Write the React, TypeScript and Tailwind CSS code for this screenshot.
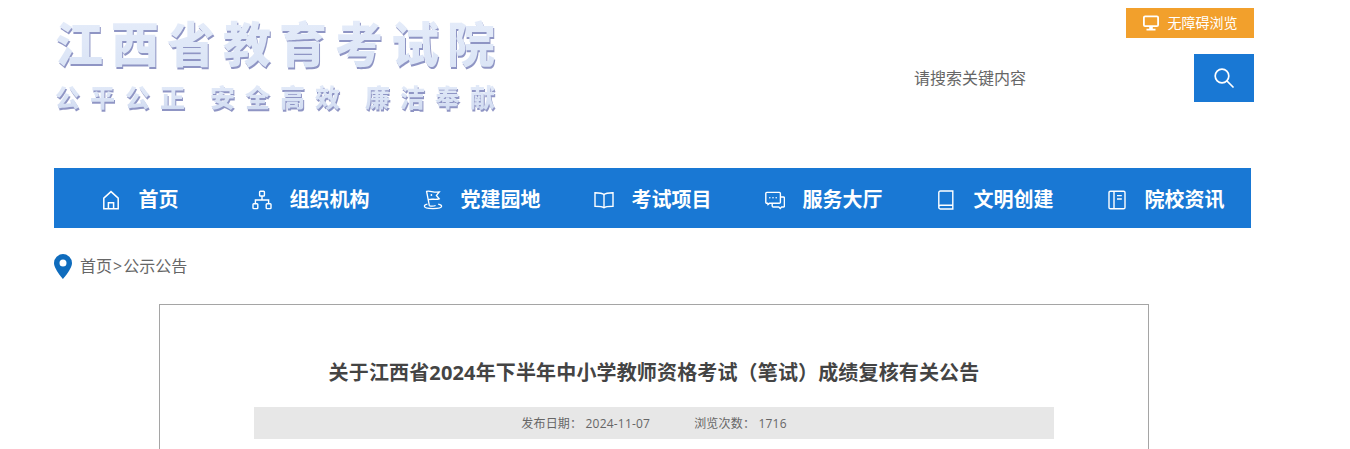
import React from 'react';

const iconClass = 'mt-[3px] w-5 h-5 shrink-0';

function HomeIcon() {
  return (
    <svg viewBox="0 0 20 20" className={iconClass} fill="none" stroke="currentColor" strokeWidth={1.5}>
      <path d="M2.800 18.800V8.200L10 1.600l7.200 6.600v10.600z" />
      <path d="M7.400 18.800v-6h5.200v6" />
    </svg>
  );
}

function OrgIcon() {
  return (
    <svg viewBox="0 0 20 20" className={iconClass} fill="none" stroke="currentColor" strokeWidth={1.4}>
      <rect x="7.600" y="1.200" width="4.800" height="4.800" rx="0.800" />
      <rect x="1" y="13.800" width="4.800" height="4.800" rx="0.800" />
      <rect x="14.200" y="13.800" width="4.800" height="4.800" rx="0.800" />
      <path d="M10 6v4M3.400 13.800V10h13.200v3.800" />
    </svg>
  );
}

function FlagIcon() {
  return (
    <svg viewBox="0 0 20 20" className={iconClass} fill="none" stroke="currentColor" strokeWidth={1.3}>
      <path d="M6.400 15.800L3.600 1.400c3.600-1 6.400 1.400 12.600.6l-2.800 3.400 2.800 3.400c-3.400 1.200-7.200-.2-11 .8" />
      <path d="M4.400 14.200c-2 .4-3 1.100-3 2.100 0 1.400 3.800 2.300 8.600 2.300s8.600-.9 8.600-2.300c0-1-1.400-1.700-3.400-2.100" />
      <path d="M6.400 15.800c2 .5 4.600.4 6.200-.3" />
      <circle cx="8.400" cy="5" r="0.900" fill="currentColor" stroke="none" />
    </svg>
  );
}

function BookOpenIcon() {
  return (
    <svg viewBox="0 0 20 20" className={iconClass} fill="none" stroke="currentColor" strokeWidth={1.4}>
      <path d="M10 4.600C8.600 3.200 6 2.800 1 2.800v13.400c5 0 7.600.3 9 1.600 1.400-1.300 4-1.600 9-1.600V2.800c-5 0-7.600.4-9 1.800z" />
      <path d="M10 4.600v13.200" />
    </svg>
  );
}

function ChatIcon() {
  return (
    <svg viewBox="0 0 20 20" className={iconClass} fill="none" stroke="currentColor" strokeWidth={1.4}>
      <path d="M7 13.200H4.600l-1.600 1.400-.4-1.400h-.8a1 1 0 0 1-1-1V3.400a1 1 0 0 1 1-1h12.600a1 1 0 0 1 1 1v9a1 1 0 0 1-1 .8z" />
      <path d="M15.400 7h3a1 1 0 0 1 1 1v8a1 1 0 0 1-1 1h-1.800l-1.400 1.400-1.400-1.400H8.200a1 1 0 0 1-1-1v-2.800" />
      <circle cx="4.800" cy="7.800" r="0.800" fill="currentColor" stroke="none" />
      <circle cx="8" cy="7.800" r="0.800" fill="currentColor" stroke="none" />
      <circle cx="11.200" cy="7.800" r="0.800" fill="currentColor" stroke="none" />
    </svg>
  );
}

function BookIcon() {
  return (
    <svg viewBox="0 0 20 20" className={iconClass} fill="none" stroke="currentColor" strokeWidth={1.4}>
      <path d="M2.800 16.400V2.600A1.600 1.600 0 0 1 4.400 1h12.400v14.200H4.400a1.600 1.600 0 0 0-1.600 1.600A2 2 0 0 0 4.400 19h12.400v-3.800" />
    </svg>
  );
}

function NotebookIcon() {
  return (
    <svg viewBox="0 0 20 20" className={iconClass} fill="none" stroke="currentColor" strokeWidth={1.4}>
      <rect x="2" y="1.200" width="16" height="17.600" rx="1.400" />
      <path d="M7 1.200v17.600M10 5.600h4.800M10 9h4.800" />
    </svg>
  );
}

const navItems = [
  { label: '首页', icon: <HomeIcon /> },
  { label: '组织机构', icon: <OrgIcon /> },
  { label: '党建园地', icon: <FlagIcon /> },
  { label: '考试项目', icon: <BookOpenIcon /> },
  { label: '服务大厅', icon: <ChatIcon /> },
  { label: '文明创建', icon: <BookIcon /> },
  { label: '院校资讯', icon: <NotebookIcon /> },
];

const sloganGroups = ['公平公正', '安全高效', '廉洁奉献'];

export default function App() {
  return (
    <div className="h-[449px] w-[1350px] overflow-hidden bg-white font-['Open_Sans','Noto_Sans_CJK_SC',sans-serif] text-[#666]">
      <header className="ml-[54px] flex h-[168px] w-[1200px] justify-between">
        {/* logo */}
        <div className="pl-px pt-[10px] [filter:drop-shadow(1px_2px_0_#8f95c4)]">
          <div className="w-[460px] bg-gradient-to-b from-[#e6edfa] to-[#d9e3f5] bg-clip-text text-[48px] font-black leading-[68px] tracking-[8px] text-transparent">
            江西省教育考试院
          </div>
          <div className="mt-[1px] flex gap-[15px] bg-gradient-to-b from-[#e6edfa] to-[#cfdaf0] bg-clip-text text-[25px] font-black leading-[36px] tracking-[10px] text-transparent">
            {sloganGroups.map((group) => (
              <span key={group}>{group}</span>
            ))}
          </div>
        </div>

        <div className="flex flex-col items-end pt-2">
          <button className="flex h-[30px] w-32 items-center justify-center gap-[9px] bg-[#f2a02c] text-sm text-white">
            <svg viewBox="0 0 16 16" className="h-4 w-4" fill="none">
              <rect x="0.900" y="1.400" width="14.200" height="9.800" rx="1.200" stroke="white" strokeWidth="1.800" />
              <path d="M6.200 12h3.600v1.800H12.500V15.500H3.500v-1.700h2.700z" fill="white" />
            </svg>
            <span className="pb-px">无障碍浏览</span>
          </button>
          <div className="mt-4 flex items-center">
            <span className="w-[280px] text-base">请搜索关键内容</span>
            <button className="flex h-12 w-[60px] items-center justify-center bg-[#1978d4] text-white">
              <svg viewBox="0 0 20 20" className="h-5 w-5" fill="none" stroke="currentColor" strokeWidth={1.7}>
                <circle cx="8" cy="8" r="6.800" />
                <path d="M13 13l6 6" strokeLinecap="round" />
              </svg>
            </button>
          </div>
        </div>
      </header>

      <nav className="ml-[54px] flex h-[60px] w-[1197px] bg-[#1978d4] text-white">
        {navItems.map((item) => (
          <a key={item.label} className="flex w-[171px] items-center justify-center gap-[18px]">
            {item.icon}
            <span className="pt-1 text-xl font-bold">{item.label}</span>
          </a>
        ))}
      </nav>

      <div className="ml-[54px] mt-[26px] flex h-[25px] items-center gap-2 text-base">
        <svg viewBox="0 0 18 25" className="h-[25px] w-[18px]">
          <path
            d="M9 0a9 9 0 0 0-9 9c0 6 9 16 9 16s9-10 9-16a9 9 0 0 0-9-9zm0 12.500a3.500 3.500 0 1 1 0-7 3.500 3.500 0 0 1 0 7z"
            fill="#0f6cbd"
          />
        </svg>
        <span className="pb-0.5">首页<span className="mx-px">&gt;</span>公示公告</span>
      </div>

      <main className="ml-[159px] mt-[25px] h-[300px] w-[990px] border border-[#a5a5a5] px-[94px]">
        <h1 className="mt-[53px] text-center text-xl font-bold leading-[30px] tracking-[0.15px] text-[#444]">
          关于江西省2024年下半年中小学教师资格考试（笔试）成绩复核有关公告
        </h1>
        <div className="mt-[19px] flex h-8 items-center justify-center gap-[44px] bg-[#e7e7e7] pt-0.5 text-xs tracking-[0.2px]">
          <span>发布日期：&nbsp;2024-11-07</span>
          <span>浏览次数：&nbsp;1716</span>
        </div>
      </main>
    </div>
  );
}
